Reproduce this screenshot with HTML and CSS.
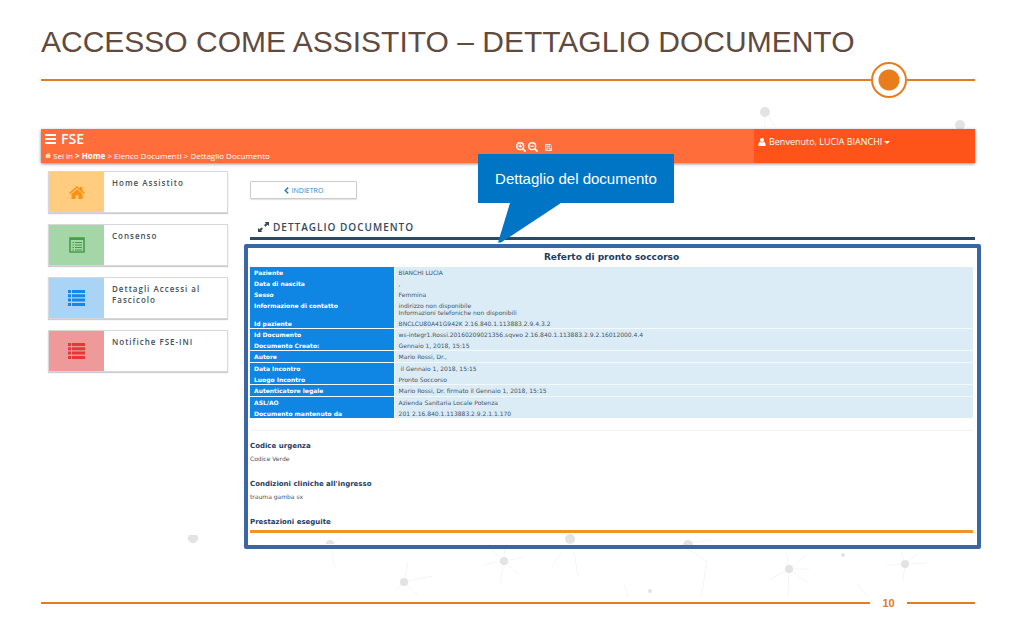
FILE: index.html
```html
<!DOCTYPE html>
<html lang="it">
<head>
<meta charset="utf-8">
<title>Accesso come assistito – Dettaglio documento</title>
<link rel="stylesheet" href="styles.css">
</head>
<body>
<div class="slide">
  <svg class="network" viewBox="0 0 1023 638" aria-hidden="true">
    <g stroke="#f6f6f6" stroke-width="1" fill="none">
      <path d="M765 112l10 14M765 112v16M330 544l12-7M332 549l2 18M404 582l4-21M404 582l28-6M404 582l-10 9M404 582l14 13M504 561l1-13M504 561l22-4M504 561l-20 4M504 561l-4 22M504 561l15 14M504 561l-12-11M562 552l-10 15M574 552l4 24M688 543l24-3M688 549l18 12M707 560l-6 38M789 569l-3-17M789 569l18-15M789 569h20M789 569l20 15M789 569l-1 28M789 569l-20 11M905 564l14-11M905 564l22-1M905 564l-2 18M905 564l-18 1M905 564l-4-12M625 585l3 13M857 584l10 12"/>
    </g>
    <g fill="#e3e3e3">
      <circle cx="765" cy="112" r="5"/>
      <circle cx="960" cy="125" r="5"/>
      <path d="M189 535h8a5 5 0 1 1-8 0z"/>
      <path d="M326 544a4 4 0 0 1 8 0z"/>
      <circle cx="570" cy="539" r="5"/>
      <path d="M683 545a5 5 0 0 1 10 0z"/>
      <circle cx="504" cy="561" r="4"/>
      <circle cx="404" cy="582" r="4"/>
      <circle cx="789" cy="569" r="4"/>
      <circle cx="905" cy="564" r="4"/>
      <circle cx="843" cy="555" r="2"/>
      <circle cx="650" cy="591" r="2"/>
    </g>
  </svg>

  <h1 class="slide-title">ACCESSO COME ASSISTITO – DETTAGLIO DOCUMENTO</h1>
  <div class="title-rule">
    <span class="rule"></span><span class="ring"></span><span class="rule rule-end"></span>
  </div>

  <div class="app">
    <header class="topbar">
      <div class="brand-area">
        <div class="brand">
          <button class="icon-button" type="button" aria-label="Menu">
            <svg width="11" height="10" viewBox="0 0 11 10" fill="currentColor"><path d="M0 0h11v2H0zM0 4h11v2H0zM0 8h11v2H0z"/></svg>
          </button>
          <span>FSE</span>
        </div>
        <nav class="breadcrumb">
          <svg width="6" height="5" viewBox="0 0 14 12" fill="currentColor"><path d="M7 0l7 6-1 1-6-5-6 5-1-1zM2 7l5-4 5 4v5H8V8H6v4H2zM10 1h2v3l-2-2z"/></svg>
          <span>Sei in <b>&gt; <a href="#">Home</a></b> &gt; <a href="#">Elenco Documenti</a> &gt; Dettaglio Documento</span>
        </nav>
      </div>
      <div class="tools">
        <button class="icon-button" type="button" aria-label="Ingrandisci">
          <svg width="10" height="10" viewBox="0 0 10 10" fill="none" stroke="currentColor"><circle cx="4.2" cy="4.2" r="3.4" stroke-width="1.4"/><path d="M6.8 6.8l2.7 2.7" stroke-width="1.8"/><path d="M2.3 4.2h3.8M4.2 2.3v3.8" stroke-width="1"/></svg>
        </button>
        <button class="icon-button" type="button" aria-label="Riduci">
          <svg width="10" height="10" viewBox="0 0 10 10" fill="none" stroke="currentColor"><circle cx="4.2" cy="4.2" r="3.4" stroke-width="1.4"/><path d="M6.8 6.8l2.7 2.7" stroke-width="1.8"/><path d="M2.3 4.2h3.8" stroke-width="1"/></svg>
        </button>
        <button class="icon-button save" type="button" aria-label="Salva">
          <svg width="7" height="7" viewBox="0 0 8 8" fill="none" stroke="currentColor" stroke-width=".9"><path d="M.5.5h5.6l1.4 1.4v5.6h-7zM2 .5v2.4h3.4V.5M2 7.500V4.700h4v2.800"/></svg>
        </button>
      </div>
      <div class="user-area">
        <button class="user" type="button">
          <svg width="8" height="8" viewBox="0 0 8 9" fill="currentColor"><circle cx="4" cy="2.300" r="2.300"/><path d="M0 9V7.500C0 5.500 1 4.300 2.200 4.300a2.800 2.800 0 0 0 3.600 0C7 4.300 8 5.500 8 7.500V9z"/></svg>
          <span>Benvenuto, LUCIA BIANCHI</span>
          <svg class="caret" width="6" height="3" viewBox="0 0 6 3" fill="currentColor"><path d="M0 0h6L3 3z"/></svg>
        </button>
      </div>
    </header>

    <div class="workspace">
      <nav class="menu">
        <a class="card" href="#">
          <span class="tile orange"><svg width="16" height="13" viewBox="0 0 16 13" fill="currentColor"><path d="M8 0l3 2.600V1h2.300v3.600L16 7l-1 1.100L8 2.100 1 8.100 0 7z"/><path d="M8 3.200l5.500 4.700V13H9.500V9.300h-3V13h-4V7.900z"/></svg></span>
          <span class="card-label">Home Assistito</span>
        </a>
        <a class="card" href="#">
          <span class="tile green"><svg width="16" height="16" viewBox="0 0 16 16" fill="none" stroke="currentColor"><path d="M1 1h14v14H1z" stroke-width="1.600"/><path d="M1 2h14" stroke-width="2"/><path d="M3.500 5.500H5M6 5.500h7M3.500 8H5M6 8h7M3.500 10.500H5M6 10.500h7M3.500 13H5M6 13h7" stroke-width="1.200"/></svg></span>
          <span class="card-label">Consenso</span>
        </a>
        <a class="card" href="#">
          <span class="tile blue"><svg width="17" height="16" viewBox="0 0 17 16" fill="currentColor"><path d="M0 0h3v3H0zM4 0h13v3H4zM0 4.300h3v3H0zM4 4.300h13v3H4zM0 8.600h3v3H0zM4 8.600h13v3H4zM0 13h3v3H0zM4 13h13v3H4z"/></svg></span>
          <span class="card-label">Dettagli Accessi al Fascicolo</span>
        </a>
        <a class="card" href="#">
          <span class="tile red"><svg width="17" height="16" viewBox="0 0 17 16" fill="currentColor"><path d="M0 0h3v3H0zM4 0h13v3H4zM0 4.300h3v3H0zM4 4.300h13v3H4zM0 8.600h3v3H0zM4 8.600h13v3H4zM0 13h3v3H0zM4 13h13v3H4z"/></svg></span>
          <span class="card-label">Notifiche FSE-INI</span>
        </a>
      </nav>

      <main class="content">
        <div class="content-head">
          <button class="back" type="button">
            <svg width="5" height="7" viewBox="0 0 5 7" fill="none" stroke="currentColor" stroke-width="1.500"><path d="M4.200.6L1.200 3.500l3 2.900"/></svg>
            INDIETRO
          </button>
          <h2 class="page-title">
            <svg width="11" height="10" viewBox="0 0 11 10"><path d="M6.500 0H11v4L9.600 2.800 7.500 4.700 6 3.300 8 1.300zM0 6l1.400 1.200L3.500 5.500 5 6.800 3 8.700 4.500 10H0z" fill="currentColor"/></svg>
            DETTAGLIO DOCUMENTO
          </h2>
        </div>

        <article class="report">
          <h3 class="report-title">Referto di pronto soccorso</h3>
          <table class="facts">
            <tbody>
              <tr><th scope="row">Paziente</th><td>BIANCHI LUCIA</td></tr>
              <tr><th scope="row">Data di nascita</th><td>,</td></tr>
              <tr><th scope="row">Sesso</th><td>Femmina</td></tr>
              <tr><th scope="row">Informazione di contatto</th><td>indirizzo non disponibile<br>Informazioni telefoniche non disponibili</td></tr>
              <tr><th scope="row">Id paziente</th><td>BNCLCU80A41G942K 2.16.840.1.113883.2.9.4.3.2</td></tr>
            </tbody>
            <tbody>
              <tr><th scope="row">Id Documento</th><td>ws-integr1.Rossi.20160209021356.sqveo 2.16.840.1.113883.2.9.2.16012000.4.4</td></tr>
              <tr><th scope="row">Documento Creato:</th><td>Gennaio 1, 2018, 15:15</td></tr>
            </tbody>
            <tbody>
              <tr><th scope="row">Autore</th><td>Mario Rossi, Dr.,</td></tr>
            </tbody>
            <tbody>
              <tr><th scope="row">Data Incontro</th><td>&nbsp;il Gennaio 1, 2018, 15:15</td></tr>
              <tr><th scope="row">Luogo Incontro</th><td>Pronto Soccorso</td></tr>
            </tbody>
            <tbody>
              <tr><th scope="row">Autenticatore legale</th><td>Mario Rossi, Dr. firmato il Gennaio 1, 2018, 15:15</td></tr>
            </tbody>
            <tbody>
              <tr><th scope="row">ASL/AO</th><td>Azienda Sanitaria Locale Potenza</td></tr>
              <tr><th scope="row">Documento mantenuto da</th><td>201 2.16.840.1.113883.2.9.2.1.1.170</td></tr>
            </tbody>
          </table>
          <div class="sections">
            <section class="entry"><h4>Codice urgenza</h4><p>Codice Verde</p></section>
            <section class="entry"><h4>Condizioni cliniche all'ingresso</h4><p>trauma gamba sx</p></section>
            <section class="entry last"><h4>Prestazioni eseguite</h4></section>
          </div>
        </article>
      </main>
    </div>

    <div class="callout">
      Dettaglio del documento
      <svg class="tail" width="64" height="40" viewBox="0 0 64 40" aria-hidden="true"><path d="M12 0h51L3 39.500H0z" fill="#0075c6"/></svg>
    </div>
  </div>

  <footer class="slide-footer">
    <span class="rule"></span><span class="page-number">10</span><span class="rule rule-end"></span>
  </footer>
</div>
</body>
</html>
```
FILE: styles.css
```css
* { box-sizing: border-box; }
body { margin: 0; background: #fff; font-family: "Open Sans", "Noto Sans", sans-serif; }
h1, h2, h3, h4, p { margin: 0; font-weight: normal; }
a { color: inherit; text-decoration: none; }
button { font: inherit; color: inherit; cursor: pointer; }
svg { display: block; flex: none; }

.slide { position: relative; padding: 22px 48px 20px 41px; }
.network { position: absolute; left: 0; top: 0; width: 100%; pointer-events: none; }

.slide-title {
  font-family: "Liberation Sans Narrow", "Arial Narrow", "Liberation Sans", sans-serif;
  font-size: 30px; line-height: 40px; color: #5f4b3f; white-space: nowrap;
}
.title-rule, .slide-footer { display: flex; align-items: center; }
.rule { flex: 1; height: 2px; background: #e07b26; }
.rule-end { flex: 0 0 68px; }
.ring {
  width: 36px; height: 36px; border: 2px solid #e97c1c; border-radius: 50%;
  background: radial-gradient(circle, #e97c1c 10px, #fff 11px);
}

.app { position: relative; margin-top: 31px; }
.topbar {
  position: relative; display: grid; grid-template-columns: 475fr 238fr 221px;
  min-height: 34px; background: #ff6d3b; color: #fff; box-shadow: 0 1px 3px rgba(0, 0, 0, .45);
}
.icon-button { display: block; padding: 0; border: 0; background: none; }
.brand-area { padding: 1px 4px 0; }
.brand { display: flex; align-items: center; gap: 5px; font-size: 14px; line-height: 18px; font-weight: 600; }
.breadcrumb { display: flex; align-items: center; gap: 2px; font-size: 8px; line-height: 15px; white-space: nowrap; }
.tools { display: flex; align-items: flex-start; gap: 2px; padding-top: 13px; }
.save { padding: 2px 0 0 5px; }
.user-area { background: #ff5419; padding: 6px 4px; }
.user { display: flex; align-items: center; gap: 3px; padding: 0; border: 0; background: none; font-size: 9px; line-height: 14px; white-space: nowrap; }
.caret { margin-left: -1px; }

.workspace { display: grid; grid-template-columns: 180px 1fr; column-gap: 16px; margin-right: -6px; padding-left: 7px; }
.menu { display: flex; flex-direction: column; gap: 11px; padding-top: 8px; }
.card { display: flex; min-height: 42px; border: 1px solid #d8d8dc; background: #fff; box-shadow: 0 1px 1px rgba(0, 0, 0, .2); }
.tile { display: flex; flex: 0 0 55px; align-items: center; justify-content: center; }
.orange { background: #ffcc80; color: #ff9010; }
.green { background: #a5d6a7; color: #42a047; }
.blue { background: #a9d4f5; color: #1687e5; }
.red { background: #ef9a9a; color: #e53935; }
.card-label { padding: 5px 8px; font-size: 8px; line-height: 11px; letter-spacing: 1px; font-weight: 600; color: #41505c; }

.content-head { margin: 0 6px 4px; padding-top: 18px; border-bottom: 3px solid #2c4a62; }
.back {
  display: flex; align-items: center; justify-content: center; gap: 3px; width: 107px; height: 18px; padding: 0;
  border: 1px solid #ccc; border-radius: 1px; background: #fff; color: #2b83c4; font-size: 7px;
  box-shadow: 0 1px 1px rgba(0, 0, 0, .12);
}
.page-title {
  display: flex; align-items: center; gap: 4px; padding: 21px 8px 3px; color: #34495e;
  font-size: 10px; line-height: 14px; letter-spacing: 1px; font-weight: 600;
}

.report {
  position: relative; padding: 1px 4px 12px 2px; border: 4px solid #3a66a4; border-radius: 2px;
  font-family: "DejaVu Sans", Verdana, sans-serif; font-size: 6px; line-height: 7px; color: #3f5468;
}
.report-title { font-size: 9px; line-height: 12px; padding: 2px 0 4px; font-weight: bold; text-align: center; color: #1c3c63; }
.facts { width: 100%; border-collapse: separate; border-spacing: 0; }
.facts th, .facts td { padding: 2px 4px; text-align: left; vertical-align: top; }
.facts th { width: 20%; background: #0f85e4; color: #fff; font-weight: bold; border-right: 1px solid #eef7fc; }
.facts td { background: #dbecf6; }
.facts tr:last-child:not(:first-child) > * { padding-bottom: 1px; }
.facts tbody + tbody tr:first-child > * { border-top: 1px solid #f3fafd; }
.sections { margin-top: 12px; padding-top: 10px; border-top: 1px solid #f0f3f5; }
.entry { padding-bottom: 17px; }
.entry h4 { font-size: 7px; line-height: 10px; font-weight: bold; color: #1c3c63; }
.entry p { padding-top: 4px; line-height: 7px; }
.last { padding-bottom: 3px; border-bottom: 3px solid #f29227; }

.callout {
  position: absolute; left: 437px; top: 25px; width: 196px; padding: 14px 0 13px;
  background: #0075c6; color: #fff; text-align: center; white-space: nowrap;
  font-family: "Liberation Sans Narrow", "Arial Narrow", "Liberation Sans", sans-serif;
  font-size: 15px; line-height: 22px;
}
.tail { position: absolute; left: 20px; top: 100%; }

.slide-footer { margin-top: 46px; }
.page-number { width: 37px; text-align: center; font-family: "Liberation Sans", sans-serif; font-size: 11px; line-height: 16px; font-weight: bold; color: #e07b26; }
```
